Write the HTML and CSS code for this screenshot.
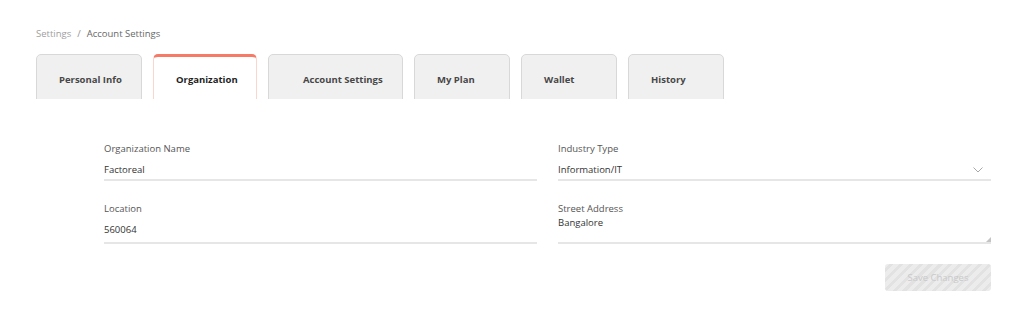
FILE: index.html
```html
<!DOCTYPE html>
<html lang="en">
<head>
<meta charset="utf-8">
<title>Account Settings</title>
<link rel="stylesheet" href="styles.css">
</head>
<body>
<div class="page">
  <nav class="breadcrumb"><span class="crumb-root">Settings</span><span class="crumb-sep">/</span><span class="crumb-current">Account Settings</span></nav>
  <div class="tabs">
    <div class="tab tab-personal">Personal Info</div>
    <div class="tab tab-org active">Organization</div>
    <div class="tab tab-account">Account Settings</div>
    <div class="tab tab-plan">My Plan</div>
    <div class="tab tab-wallet">Wallet</div>
    <div class="tab tab-history">History</div>
  </div>
  <form class="form">
    <div class="grid">
      <div class="field">
        <label class="label">Organization Name</label>
        <input class="input" type="text" value="Factoreal">
      </div>
      <div class="field">
        <label class="label">Industry Type</label>
        <div class="input select"><span>Information/IT</span><svg class="chev" width="10" height="6" viewBox="0 0 10 6"><polyline points="0.5,0.5 5,5 9.5,0.5" fill="none" stroke="#a8a8a8" stroke-width="1"/></svg></div>
      </div>
      <div class="field row2">
        <label class="label">Location</label>
        <input class="input tall" type="text" value="560064">
      </div>
      <div class="field row2">
        <label class="label">Street Address</label>
        <div class="area-wrap"><textarea class="input area">Bangalore</textarea></div>
      </div>
    </div>
    <div class="actions">
      <button type="button" class="save" disabled>Save Changes</button>
    </div>
  </form>
</div>
</body>
</html>
```
FILE: styles.css
```css
* { box-sizing: border-box; }
html, body { margin: 0; background: #fff; }
body {
  font-family: "Open Sans", "Noto Sans", sans-serif;
  font-size: 9.5px;
  color: #333;
}
.page { padding: 26px 0 0 36px; }
.breadcrumb { font-size: 9.5px; line-height: 14px; color: #686868; padding-top: 1px; }
.crumb-root { color: #a0a0a0; }
.crumb-sep { color: #909090; margin: 0 6px; }
.tabs {
  display: flex;
  gap: 11px;
  margin-top: 13px;
  height: 45px;
  overflow: hidden;
}
.tab {
  height: 50px;
  background: #f0f0f0;
  border: 1px solid #d8d8d8;
  border-radius: 5px 5px 0 0;
  font-weight: 700;
  font-size: 9.5px;
  color: #474747;
  padding: 18px 0 0 22px;
  line-height: 14px;
  flex: none;
}
.tab.active {
  background: #fff;
  color: #1e1e1e;
  border-color: #fbd6cf;
  border-top: 3px solid #f77a66;
  padding-top: 16px;
}
.tab-personal { width: 106px; }
.tab-org { width: 104px; }
.tab-account { width: 135px; padding-left: 34px; }
.tab-plan { width: 96px; }
.tab-wallet { width: 96px; }
.tab-history { width: 96px; }
.form { padding: 43px 33px 0 68px; }
.grid {
  display: grid;
  grid-template-columns: 1fr 1fr;
  column-gap: 21px;
  row-gap: 21px;
}
.field { display: flex; flex-direction: column; }
.label { line-height: 14px; color: #555; margin-bottom: 3px; font-size: 9.5px; }
.row2 .label { margin-bottom: 0; }
.input {
  font-family: inherit;
  font-size: 9.5px;
  color: #333;
  border: 0;
  border-bottom: 2px solid #e6e6e6;
  background: transparent;
  padding: 0;
  height: 22px;
  outline: none;
  width: 100%;
}
.tall { height: 28px; }
.select {
  display: flex;
  align-items: center;
  justify-content: space-between;
  padding-right: 8px;
}
.chev { margin-top: 2px; }
.area-wrap { position: relative; }
.area {
  height: 28px;
  line-height: 14px;
  resize: none;
  display: block;
}
.area-wrap::after {
  content: "";
  position: absolute;
  right: 0;
  bottom: 2px;
  width: 0;
  height: 0;
  border-left: 5px solid transparent;
  border-bottom: 5px solid #c4c4c4;
}
.actions { display: flex; justify-content: flex-end; margin-top: 20px; }
.save {
  width: 106px;
  height: 27px;
  border: 0;
  border-radius: 3px;
  font-family: inherit;
  font-size: 9.5px;
  color: #c9c9c9;
  background: repeating-linear-gradient(-45deg, #ececec 0 4px, #e2e2e2 4px 7px);
}
```
